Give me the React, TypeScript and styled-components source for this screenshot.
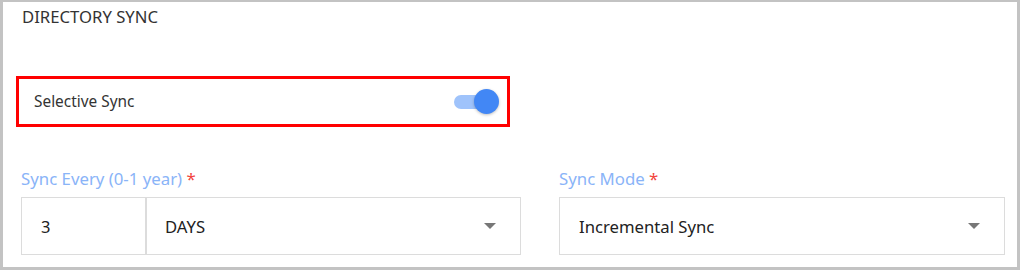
import React from "react";
import styled, { createGlobalStyle } from "styled-components";

const Global = createGlobalStyle`
  html, body { margin: 0; padding: 0; background: #fff; }
  body { font-family: "Noto Sans", "Open Sans", sans-serif; color: #333; }
  * { box-sizing: border-box; }
`;

const Panel = styled.section`
  width: 1020px;
  height: 270px;
  border: 3px solid #c3c3c3;
  border-top-width: 2px;
  padding: 5px 12px 0 18px;
  background: #fff;
`;

const Title = styled.h2`
  margin: 0 0 0 1px;
  font-size: 16.7px;
  line-height: 20px;
  font-weight: 400;
  color: #333;
`;

const Grid = styled.div`
  display: grid;
  grid-template-columns: 500px 1fr;
  column-gap: 38px;
`;

const HighlightRow = styled.div`
  margin: 49px 0 0 -5px;
  width: 494px;
  height: 51px;
  border: 3px solid #ff0000;
  display: flex;
  align-items: center;
  justify-content: space-between;
  padding: 0 8px 0 15px;
`;

const HighlightSpacer = styled.div`
  margin-top: 49px;
  height: 51px;
`;

const RowLabel = styled.span`
  font-size: 15.4px;
  color: #333;
`;

const Switch = styled.span`
  position: relative;
  width: 45px;
  height: 25px;
  display: inline-flex;
  align-items: center;
`;

const Track = styled.span`
  width: 43px;
  height: 14px;
  border-radius: 7px;
  background: #9fc3fb;
`;

const Thumb = styled.span`
  position: absolute;
  right: 0;
  top: 0;
  width: 25px;
  height: 25px;
  border-radius: 50%;
  background: #4287f5;
  box-shadow: 0 1px 3px rgba(0, 0, 0, 0.25);
`;

const Field = styled.div`
  margin-top: 42px;
`;

const FieldLabel = styled.label`
  display: block;
  font-size: 16.8px;
  line-height: 20px;
  color: #8ab4f8;
  margin-bottom: 8px;
`;

const Req = styled.span`
  color: #f2453d;
`;

const Box = styled.div`
  display: flex;
  height: 58px;
  border: 1px solid #dcdcdc;
`;

const NumCell = styled.div`
  width: 125px;
  border-right: 2px solid #dcdcdc;
  display: flex;
  align-items: center;
  padding-left: 19px;
  font-size: 16.5px;
  color: #222;
`;

const SelectCell = styled.div<{ $pad: number }>`
  flex: 1;
  display: flex;
  align-items: center;
  justify-content: space-between;
  padding: 0 24px 0 ${(p) => p.$pad}px;
  font-size: 16.7px;
  color: #222;
`;

const Caret = styled.span`
  width: 0;
  height: 0;
  border-left: 6px solid transparent;
  border-right: 6px solid transparent;
  border-top: 6px solid #777;
`;

export default function App() {
  return (
    <>
      <Global />
      <Panel>
        <Title>DIRECTORY SYNC</Title>
        <Grid>
          <div>
            <HighlightRow>
              <RowLabel>Selective Sync</RowLabel>
              <Switch>
                <Track />
                <Thumb />
              </Switch>
            </HighlightRow>
            <Field>
              <FieldLabel>
                Sync Every (0-1 year) <Req>*</Req>
              </FieldLabel>
              <Box>
                <NumCell>3</NumCell>
                <SelectCell $pad={18}>
                  DAYS
                  <Caret />
                </SelectCell>
              </Box>
            </Field>
          </div>
          <div>
            <HighlightSpacer />
            <Field>
              <FieldLabel>
                Sync Mode <Req>*</Req>
              </FieldLabel>
              <Box>
                <SelectCell $pad={19}>
                  Incremental Sync
                  <Caret />
                </SelectCell>
              </Box>
            </Field>
          </div>
        </Grid>
      </Panel>
    </>
  );
}
